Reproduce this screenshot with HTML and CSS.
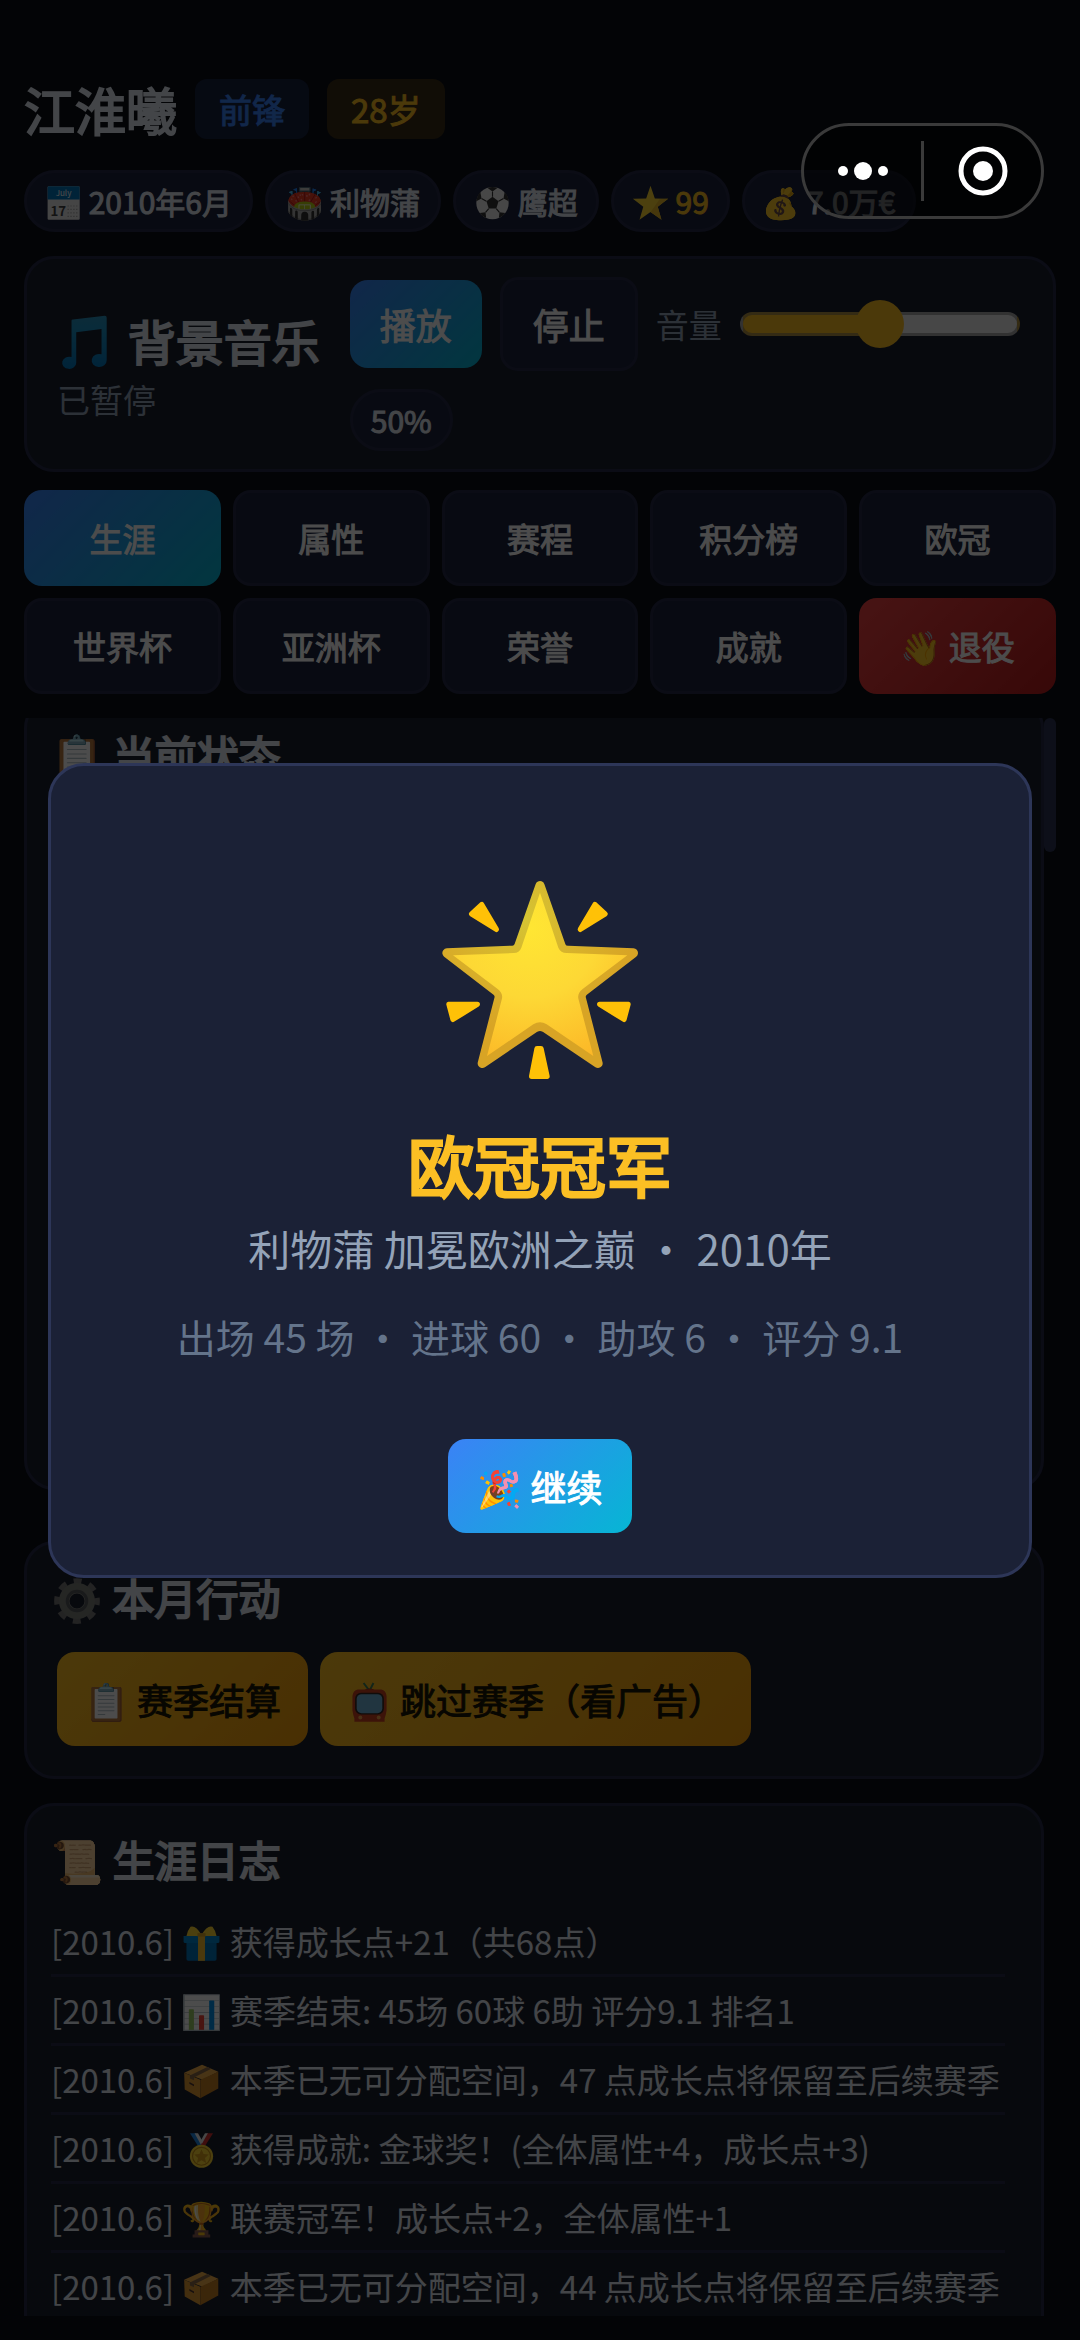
FILE: index.html
```html
<!DOCTYPE html>
<html lang="zh-CN">
<head>
    <meta charset="UTF-8">
    <meta name="viewport" content="width=device-width, initial-scale=1.0">
    <title>足球生涯</title>
    <link rel="stylesheet" href="styles.css">
</head>
<body>
    <!-- icons -->
    <svg class="sprite" aria-hidden="true">
        <defs>
            <linearGradient id="note-fill" x1="0" y1="0" x2="0" y2="1">
                <stop offset="0" stop-color="#2a93bd"/>
                <stop offset="0.3" stop-color="#1b8fc4"/>
                <stop offset="1" stop-color="#0277bd"/>
            </linearGradient>
            <radialGradient id="star-fill" gradientUnits="userSpaceOnUse" cx="390" cy="230" r="420">
                <stop offset="0" stop-color="#ffe633"/>
                <stop offset="0.5" stop-color="#fdd835"/>
                <stop offset="1" stop-color="#fcb827"/>
            </radialGradient>
            <radialGradient id="star-edge" gradientUnits="userSpaceOnUse" cx="370" cy="200" r="340">
                <stop offset="0" stop-color="#d5c433"/>
                <stop offset="0.6" stop-color="#d8b02a"/>
                <stop offset="1" stop-color="#d8a425"/>
            </radialGradient>
        </defs>
        <symbol id="i-ball" viewBox="0 0 128 128">
            <circle cx="64" cy="66" r="56" fill="#eee"/>
            <path d="M64 44l21 16-8 25H51l-8-25z" fill="#333"/>
            <path d="M46 13q18-6 36 0L64 26zM8 60q2-20 14-32l4 22zM120 60q-2-20-14-32l-4 22zM20 100q8 12 22 18l-2-20zM108 100q-8 12-22 18l2-20z" fill="#333"/>
            <path d="M64 44V26M43 60L26 50M85 60l17-10M51 85L40 98M77 85l11 13" stroke="#333" stroke-width="4"/>
        </symbol>
        <symbol id="i-star" viewBox="0 0 128 128">
            <path d="M64 6l15 44 46 1-36 28 13 45-38-27-38 27 13-45L3 51l46-1z" fill="#fdd835"/>
            <path d="M64 97l38 27-13-45 36-28-30 2-17 25z" fill="#e9b92b"/>
        </symbol>
        <symbol id="i-music" viewBox="0 0 128 128">
            <path d="M31 16q0-2 3-2l68-8q4 0 4 4v91a16 14 0 1 1-11-13V34l-54 7v65a15 13 0 1 1-10-12z" fill="url(#note-fill)"/>
        </symbol>
        <symbol id="i-gear" viewBox="0 0 128 128">
            <circle cx="64" cy="64" r="50" fill="none" stroke="#757575" stroke-width="22" stroke-dasharray="20 19.27" stroke-dashoffset="10"/>
            <circle cx="64" cy="64" r="34" fill="none" stroke="#7d7f7b" stroke-width="28"/>
            <circle cx="64" cy="64" r="26" fill="none" stroke="#54585a" stroke-width="8"/>
        </symbol>
        <symbol id="i-tv" viewBox="0 0 128 128">
            <path d="M46 6l18 24L76 6" fill="none" stroke="#3f7d55" stroke-width="6"/>
            <path d="M44 30q20-14 40 0z" fill="#a3341c"/>
            <path d="M28 26h72q14 2 16 20v44q-2 14-6 24v10H18v-10q-4-10-6-24V46q2-18 16-20z" fill="#c9401f"/>
            <rect x="20" y="36" width="88" height="66" rx="18" fill="#3b2a22"/>
            <rect x="25" y="40" width="78" height="58" rx="15" fill="#6fb3d8"/>
            <circle cx="36" cy="111" r="6" fill="#f0a04b"/>
            <circle cx="92" cy="111" r="6" fill="#f0a04b"/>
        </symbol>
        <symbol id="i-gift" viewBox="0 0 128 128">
            <path d="M12 52h104v66q0 6-6 6H18q-6 0-6-6z" fill="#0277bd"/>
            <path d="M2 38h124v20q0 4-4 4H6q-4 0-4-4z" fill="#0288d1"/>
            <path d="M52 38h24v86H52z" fill="#fbc02d"/>
            <path d="M64 34Q44 0 26 6 16 18 12 38h104q-4-20-14-32-18-6-38 28z" fill="#fdd835"/>
            <path d="M50 28h28v12H50z" fill="#d9a425"/>
        </symbol>
        <symbol id="i-box" viewBox="0 0 128 128">
            <path d="M4 34L66 6l56 24-54 28z" fill="#f2b04a"/>
            <path d="M4 34l56 24v64L6 92z" fill="#e09a35"/>
            <path d="M60 58l62-28v58l-62 34z" fill="#c67f22"/>
            <path d="M24 43L84 14l14 6-60 30v10l-14-6z" fill="#8a6a48"/>
            <path d="M22 66l16 8v6l-16-8z" fill="#4e342e"/>
        </symbol>
        <symbol id="i-medal" viewBox="0 0 128 128">
            <path d="M24 4h22l26 44H52z" fill="#1e88e5"/>
            <path d="M40 4h12l22 40H62z" fill="#eee"/>
            <path d="M82 4h22L76 48H60z" fill="#d3302f"/>
            <path d="M76 4h10L66 40l-6-8z" fill="#eee"/>
            <circle cx="64" cy="84" r="40" fill="#fdd835"/>
            <circle cx="64" cy="84" r="31" fill="none" stroke="#c98f14" stroke-width="4"/>
            <path d="M64 60l7 16 18 2-13 12 4 17-16-9-16 9 4-17-13-12 18-2z" fill="#d9a01c"/>
        </symbol>
    </svg>

    <div class="app">
        <header class="header">
            <div class="player">
                <h1 class="player-name">江淮曦</h1>
                <span class="badge badge-pos">前锋</span>
                <span class="badge badge-age">28岁</span>
            </div>
            <div class="chips">
                <span class="chip"><svg class="ico ico-calendar" viewBox="0 0 128 128">
                    <rect x="9" y="8" width="111" height="116" rx="4" fill="#e8e8e8"/>
                    <path d="M13 8h103q4 0 4 4v42H9V12q0-4 4-4z" fill="#0277bd"/>
                    <text x="64" y="40" text-anchor="middle" font-size="28" fill="#fff">July</text>
                    <text x="46" y="112" text-anchor="middle" font-size="46" font-weight="bold" fill="#424242">17</text>
                    <path d="M78 76h38M78 88h38M78 100h38M78 112h38" stroke="#9e9e9e" stroke-width="4" stroke-dasharray="4 6"/>
                </svg> 2010年6月</span>
                <span class="chip">🏟️ 利物蒲</span>
                <span class="chip"><svg class="ico"><use href="#i-ball"/></svg> 鹰超</span>
                <span class="chip chip-gold"><svg class="ico"><use href="#i-star"/></svg> 99</span>
                <span class="chip">💰 7.0万€</span>
            </div>
        </header>

        <section class="music">
            <div class="music-info">
                <h2 class="music-title"><svg class="ico"><use href="#i-music"/></svg> 背景音乐</h2>
                <div class="music-state">已暂停</div>
            </div>
            <div class="music-controls">
                <button class="btn btn-primary btn-play">播放</button>
                <button class="btn btn-plain">停止</button>
                <label class="volume-label" for="volume">音量</label>
                <input class="volume" type="range" id="volume" min="0" max="100" value="50">
                <span class="chip">50%</span>
            </div>
        </section>

        <nav class="tabs">
            <button class="tab active">生涯</button>
            <button class="tab">属性</button>
            <button class="tab">赛程</button>
            <button class="tab">积分榜</button>
            <button class="tab">欧冠</button>
            <button class="tab">世界杯</button>
            <button class="tab">亚洲杯</button>
            <button class="tab">荣誉</button>
            <button class="tab">成就</button>
            <button class="tab tab-danger">👋 退役</button>
        </nav>

        <main class="content">
            <div class="panels">
                <section class="card card-status">
                    <h3 class="card-title">📋 当前状态</h3>
                </section>
                <section class="card">
                    <h3 class="card-title"><svg class="ico"><use href="#i-gear"/></svg> 本月行动</h3>
                    <div class="actions">
                        <button class="btn btn-gold">📋 赛季结算</button>
                        <button class="btn btn-gold"><svg class="ico"><use href="#i-tv"/></svg> 跳过赛季（看广告）</button>
                    </div>
                </section>
                <section class="card">
                    <h3 class="card-title">📜 生涯日志</h3>
                    <ul class="log">
                        <li>[2010.6] <svg class="ico"><use href="#i-gift"/></svg> 获得成长点+21（共68点）</li>
                        <li>[2010.6] 📊 赛季结束: 45场 60球 6助 评分9.1 排名1</li>
                        <li>[2010.6] <svg class="ico"><use href="#i-box"/></svg> 本季已无可分配空间，47 点成长点将保留至后续赛季</li>
                        <li>[2010.6] <svg class="ico"><use href="#i-medal"/></svg> 获得成就: 金球奖！(全体属性+4，成长点+3)</li>
                        <li>[2010.6] 🏆 联赛冠军！成长点+2，全体属性+1</li>
                        <li>[2010.6] <svg class="ico"><use href="#i-box"/></svg> 本季已无可分配空间，44 点成长点将保留至后续赛季</li>
                    </ul>
                </section>
            </div>
            <div class="scrollbar"><div class="scrollbar-thumb"></div></div>
        </main>
    </div>

    <div class="overlay">
        <div class="modal" role="dialog" aria-labelledby="modal-title">
            <svg class="modal-icon" viewBox="120 87 600 600">
                <g fill="#ffc107" stroke="#ffc107" stroke-width="16" stroke-linejoin="round">
                    <path d="M245 161l-30 28 74 46z"/>
                    <path d="M585 161l30 28-74 46z"/>
                    <path d="M147 460l85 0-73 45z"/>
                    <path d="M684 460l-85 0 73 45z"/>
                    <path d="M411 593h12l18 83h-46z"/>
                </g>
                <path d="M420 104L483 284Q488 298 504 298L700 306L552 420Q540 429 544 443L594 637L435 530Q420 521 405 530L247 637L297 443Q301 429 289 420L141 306L337 298Q352 298 357 284Z" fill="url(#star-fill)" stroke="url(#star-edge)" stroke-width="28" stroke-linejoin="round"/>
                <path d="M420 125L475 290Q482 306 500 306L682 313L548 414Q530 428 536 446L580 615L440 520Q420 507 400 520L261 615L305 446Q311 428 293 414L159 313L341 306Q358 306 364 290Z" fill="url(#star-fill)"/>
            </svg>
            <h2 class="modal-title" id="modal-title">欧冠冠军</h2>
            <p class="modal-text">利物蒲 加冕欧洲之巅 • 2010年</p>
            <p class="modal-stats">出场 45 场 • 进球 60 • 助攻 6 • 评分 9.1</p>
            <button class="btn btn-primary">🎉 继续</button>
        </div>
    </div>

    <!-- mini program menu -->
    <div class="capsule">
        <button class="capsule-btn" aria-label="更多">
            <svg width="60" height="60" viewBox="0 0 60 60" fill="#fff">
                <circle cx="10" cy="30" r="5"/>
                <circle cx="30" cy="30" r="9"/>
                <circle cx="50" cy="30" r="5"/>
            </svg>
        </button>
        <span class="capsule-line"></span>
        <button class="capsule-btn" aria-label="关闭">
            <svg width="60" height="60" viewBox="0 0 60 60">
                <circle cx="30" cy="30" r="22" fill="none" stroke="#fff" stroke-width="5"/>
                <circle cx="30" cy="30" r="10" fill="#fff"/>
            </svg>
        </button>
    </div>
</body>
</html>
```
FILE: styles.css
```css
* {
    box-sizing: border-box;
    margin: 0;
    padding: 0;
}
body {
    font-family: "Noto Sans CJK SC", "Noto Color Emoji", sans-serif;
    font-size: 36px;
    background-color: #0a0e17;
    color: #e2e8f0;
}
button {
    font-family: inherit;
    cursor: pointer;
}
.sprite {
    position: absolute;
    width: 0;
    height: 0;
}
.ico {
    width: 41px;
    height: 37px;
    vertical-align: -7px;
}
.ico-calendar {
    -webkit-text-stroke: 0;
}
.app {
    display: flex;
    flex-direction: column;
    height: 100vh;
    padding: 72px 24px 24px;
}

/* regular weight thickened by a stroke, keeps the regular widths */
.player-name,
.music-title,
.card-title {
    font-weight: normal;
    -webkit-text-stroke: 2px currentColor;
}
.badge,
.chip,
.btn,
.tab {
    font-weight: normal;
    -webkit-text-stroke: 1px currentColor;
}

/* header */
.player {
    display: flex;
    align-items: center;
    gap: 18px;
    margin-bottom: 24px;
}
.player-name {
    font-size: 51px;
    line-height: 74px;
}
.badge {
    padding: 6px 24px;
    border-radius: 12px;
    font-size: 33px;
    line-height: 48px;
}
.badge-pos {
    background-color: #17223f;
    color: #3b82f6;
}
.badge-age {
    background-color: #3a2d14;
    color: #fbbf24;
}
.chips {
    display: flex;
    gap: 12px;
    margin-bottom: 24px;
}
.chip {
    padding: 6px 18px;
    border: 3px solid #252b48;
    border-radius: 31px;
    background-color: #1c223c;
    font-size: 30px;
    line-height: 44px;
    white-space: nowrap;
}
.chip .ico {
    width: 37px;
}
.chip-gold {
    color: #fbbf24;
}

/* music */
.music {
    display: flex;
    align-items: center;
    gap: 30px;
    margin-bottom: 18px;
    padding: 18px 30px;
    border: 3px solid #252b48;
    border-radius: 30px;
    background-color: #1a1f2e;
}
.music-info {
    white-space: nowrap;
}
.music-title {
    font-size: 48px;
    line-height: 70px;
}
.music-title .ico {
    width: 60px;
    height: 60px;
    vertical-align: -12px;
}
.music-state,
.volume-label {
    color: #94a3b8;
    font-size: 33px;
    line-height: 48px;
}
.music-controls {
    display: flex;
    flex: 1;
    flex-wrap: wrap;
    align-items: center;
    gap: 18px;
}
.volume {
    -webkit-appearance: none;
    appearance: none;
    width: 280px;
    height: 24px;
    border: 3px solid rgba(100, 100, 100, 0.5);
    border-radius: 12px;
    background: linear-gradient(to right, #fbbf24 50%, #efefef 50%);
    background-clip: border-box;
}
.volume::-webkit-slider-thumb {
    -webkit-appearance: none;
    width: 48px;
    height: 48px;
    border-radius: 50%;
    background-color: #fbbf24;
}

/* buttons */
.btn {
    padding: 21px 30px;
    border: none;
    border-radius: 18px;
    font-size: 36px;
    line-height: 52px;
    white-space: nowrap;
}
.btn .ico {
    width: 45px;
    height: 42px;
    vertical-align: -8px;
}
.btn-primary {
    background: linear-gradient(135deg, #3b82f6, #06b6d4);
    color: #fff;
}
.btn-play {
    padding: 18px 30px;
}
.btn-plain {
    padding: 18px 30px;
    border: 3px solid #252b48;
    background-color: #1c223c;
    color: #fff;
}
.btn-gold {
    padding: 21px 27px;
    background: linear-gradient(135deg, #fbbf24, #f59e0b);
    color: #1a1405;
}

/* tabs */
.tabs {
    display: grid;
    grid-template-columns: repeat(5, 1fr);
    gap: 12px;
    margin-bottom: 24px;
}
.tab {
    padding: 21px 0;
    border: 3px solid #252b48;
    border-radius: 18px;
    background-color: #1c223c;
    color: #fff;
    font-size: 33px;
    line-height: 48px;
}
.tab.active {
    border-color: transparent;
    background: linear-gradient(135deg, #3b82f6, #06b6d4) border-box;
}
.tab-danger {
    border-color: transparent;
    background: linear-gradient(135deg, #ef4444, #b91c1c) border-box;
}

/* content */
.content {
    display: flex;
    flex: 1;
    min-height: 0;
    overflow: hidden;
}
.panels {
    flex: 1;
    margin-top: -20px;
}
.card {
    margin-bottom: 24px;
    padding: 24px;
    border: 3px solid #252b48;
    border-radius: 30px;
    background-color: #1a1f2e;
}
.card-status {
    min-height: 792px;
    margin-bottom: 51px;
}
.card-title {
    margin-bottom: 20px;
    font-size: 42px;
    line-height: 58px;
}
.card-title .ico {
    width: 52px;
    height: 48px;
    vertical-align: -10px;
}
.actions {
    display: flex;
    gap: 12px;
    padding: 6px;
}
.log {
    padding-right: 12px;
    list-style: none;
}
.log li {
    padding: 9px 0;
    border-bottom: 3px solid #252b48;
    font-size: 33px;
    line-height: 48px;
    white-space: nowrap;
}
.scrollbar {
    width: 12px;
}
.scrollbar-thumb {
    height: 134px;
    border-radius: 6px;
    background-color: #2d3555;
}

/* modal */
.overlay {
    position: fixed;
    inset: 0;
    display: flex;
    align-items: center;
    justify-content: center;
    padding: 48px;
    background-color: rgba(0, 0, 0, 0.7);
}
.modal {
    width: 100%;
    padding: 114px 36px 42px;
    border: 3px solid #2d3658;
    border-radius: 36px;
    background-color: #1b2136;
    text-align: center;
}
.modal-icon {
    display: block;
    width: 200px;
    height: 200px;
    margin: 0 auto 36px;
}
.modal-title {
    color: #fbbf24;
    font-size: 66px;
    line-height: 94px;
    font-weight: normal;
    -webkit-text-stroke: 3px currentColor;
}
.modal-text {
    margin: 8px 0 30px;
    color: #94a3b8;
    font-size: 42px;
    line-height: 60px;
}
.modal-stats {
    margin-bottom: 75px;
    color: #64748b;
    font-size: 39px;
    line-height: 56px;
}

/* capsule */
.capsule {
    position: fixed;
    top: 123px;
    right: 36px;
    display: flex;
    align-items: center;
    width: 243px;
    height: 96px;
    border: 3px solid #3a3a3a;
    border-radius: 48px;
    background-color: rgba(0, 0, 0, 0.5);
}
.capsule-btn {
    display: flex;
    flex: 1;
    justify-content: center;
    border: none;
    background: none;
}
.capsule-line {
    width: 3px;
    height: 60px;
    background-color: #3a3a3a;
}
```
